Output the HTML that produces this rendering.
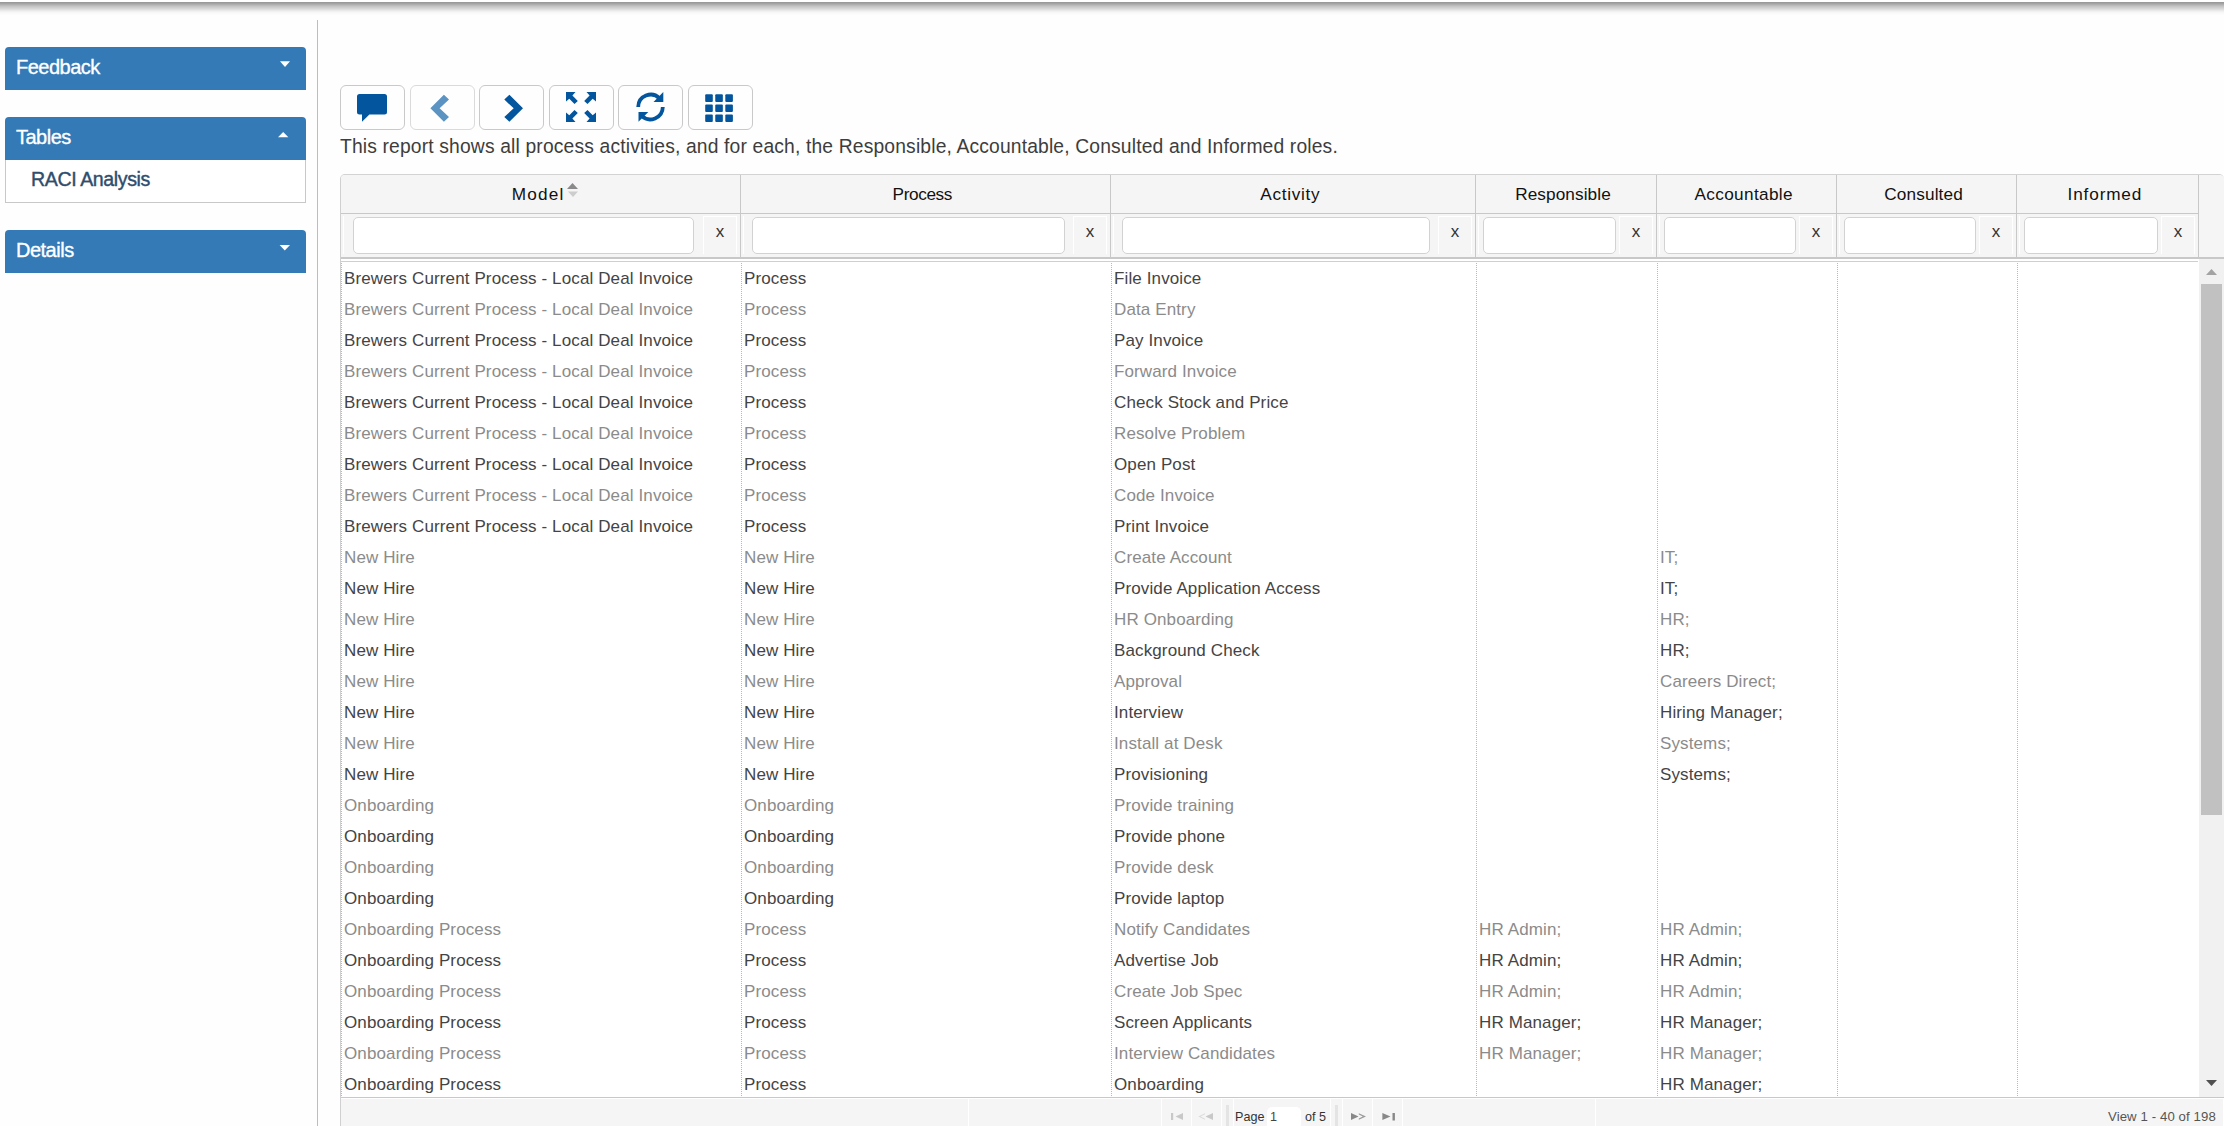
<!DOCTYPE html>
<html><head><meta charset="utf-8"><title>RACI Analysis</title>
<style>
*{box-sizing:border-box}
html,body{margin:0;padding:0}
body{width:2224px;height:1126px;overflow:hidden;position:relative;background:#fefefe;font-family:"Liberation Sans",sans-serif;color:#333}
.a{position:absolute}
.shadow{left:0;top:0;width:2224px;height:17px;background:linear-gradient(#fff 0,#fff 2px,#959595 2px,#a8a8a8 4px,#c2c2c2 6px,#dadada 9px,#eeeeee 11px,#f9f9f9 13px,#fefefe 15px)}
.vdiv{left:317px;top:20px;width:1px;height:1106px;background:#bdbdbd}
.ph{left:5px;width:301px;height:43px;background:#337ab7;border-radius:4px 4px 0 0;color:#fff;font-size:20px;letter-spacing:-0.5px;-webkit-text-stroke:0.35px #fff}
.ph span{position:absolute;left:11px;top:9px;line-height:22px;white-space:nowrap}
.car{position:absolute;width:0;height:0;border-left:5px solid transparent;border-right:5px solid transparent}
.dn{border-top:6px solid #fff}
.up{border-bottom:6px solid #fff}
.pb{left:5px;top:160px;width:301px;height:43px;background:#fff;border:1px solid #c8c8c8;border-top:0}
.pb span{position:absolute;left:25px;top:8px;line-height:22px;font-size:19.6px;letter-spacing:-0.4px;color:#2f4d6d;-webkit-text-stroke:0.4px #2f4d6d;white-space:nowrap}
.btn{top:85px;width:65px;height:45px;border:1px solid #cbcbcb;border-radius:6px;background:#fefefe}
.btn svg{position:absolute;left:0;top:0}
.desc{left:340px;top:137px;font-size:19.3px;letter-spacing:0.15px;line-height:20.5px;white-space:nowrap;color:#3d3d3d}
.grid{left:340px;top:174px;width:1884px;height:952px;border-left:1px solid #d0d0d0;border-top:1px solid #d3d3d3;border-radius:5px 5px 0 0;overflow:hidden;background:#fff}
.hdr{left:0;top:0;width:1883px;height:83px;background:#f5f5f5}
.hl{background:#c8c8c8}
.ht{top:2px;height:36px;line-height:35px;font-size:17.2px;color:#111;text-align:center;white-space:nowrap;letter-spacing:0px}
.fw{top:41px;height:38px;border-left:1px solid #fff}
.xc{top:41px;height:38px;width:34px;border:1px solid #fff;border-bottom:0;font-size:17px;line-height:30px;text-align:center;color:#333}
.inp{top:42px;height:37px;background:#fff;border:1px solid #d2d2d2;border-radius:5px}
.body{left:0;top:88px;width:1858px;height:835px;overflow:hidden;background:#fff}
.cell{height:31px;line-height:33px;font-size:17px;letter-spacing:0.12px;white-space:nowrap;overflow:hidden;padding-left:2px}
.g{color:#8b8b8b}
.d{color:#444}
.dot{top:-1px;width:1px;height:835px;border-left:1px dotted #b9b9b9}
.sb{left:1858px;top:84px;width:26px;height:839px;background:#f1f1f1}
.thumb{left:2px;top:26px;width:21px;height:531px;background:#c1c1c1}
.pager{left:0;top:924px;width:1883px;height:28px;background:#f5f5f5;font-size:13px;color:#444}
.ptxt{top:10px;font-size:12.6px;line-height:16px;white-space:nowrap}
</style></head><body>
<div class="a shadow"></div>
<div class="a vdiv"></div>
<div class="a ph" style="top:47px"><span>Feedback</span><svg class="a" style="left:0;top:0" width="301" height="43"><path d="M275 14.3H285L280 20Z" fill="#fff"/></svg></div>
<div class="a ph" style="top:117px"><span>Tables</span><svg class="a" style="left:0;top:0" width="301" height="43"><path d="M273 20.2H283.4L278.2 15Z" fill="#fff"/></svg></div>
<div class="a pb"><span>RACI Analysis</span></div>
<div class="a ph" style="top:230px"><span>Details</span><svg class="a" style="left:0;top:0" width="301" height="43"><path d="M274.6 14.9H285L279.8 20.5Z" fill="#fff"/></svg></div>
<div class="a btn" style="left:340px;border-color:#c9c9c9"><svg width="65" height="45" viewBox="0 0 65 45" style="left:-1px;top:-1px"><path fill="#03559e" d="M19.5 9H44.5A2.5 2.5 0 0 1 47 11.5V26.9A2.5 2.5 0 0 1 44.5 29.4H29.4L22 36.8V29.4H19.5A2.5 2.5 0 0 1 17 26.9V11.5A2.5 2.5 0 0 1 19.5 9Z"/></svg></div>
<div class="a btn" style="left:409.6px;border-color:#dadada"><svg width="65" height="45" viewBox="0 0 65 45" style="left:-1px;top:-1px"><path fill="#5b93c3" d="M33.9 9.8L39 14.6 29.6 23.3 39 32 33.9 36.8 20.4 23.3z"/></svg></div>
<div class="a btn" style="left:479.2px;border-color:#c9c9c9"><svg width="65" height="45" viewBox="0 0 65 45" style="left:-1px;top:-1px"><path fill="#03559e" d="M30.4 9.8L25.3 14.6 34.7 23.3 25.3 32 30.4 36.8 44 23.3z"/></svg></div>
<div class="a btn" style="left:548.8px;border-color:#c9c9c9"><svg width="65" height="45" viewBox="0 0 65 45" style="left:-1px;top:-1px"><g transform="translate(17 7)" fill="#03559e"><path d="M0 0H9.5L6.4 3.5 11.8 8.9 8.5 12.1 3.3 6.7 0 9.6Z"/><path transform="translate(30 0) scale(-1 1)" d="M0 0H9.5L6.4 3.5 11.8 8.9 8.5 12.1 3.3 6.7 0 9.6Z"/><path transform="translate(0 30) scale(1 -1)" d="M0 0H9.5L6.4 3.5 11.8 8.9 8.5 12.1 3.3 6.7 0 9.6Z"/><path transform="translate(30 30) scale(-1 -1)" d="M0 0H9.5L6.4 3.5 11.8 8.9 8.5 12.1 3.3 6.7 0 9.6Z"/></g></svg></div>
<div class="a btn" style="left:618.4px;border-color:#c9c9c9"><svg width="65" height="45" viewBox="0 0 65 45" style="left:-1px;top:-1px"><g fill="none" stroke="#03559e" stroke-width="3.8"><path d="M20.2 22A12.5 12.5 0 0 1 41.5 13.3"/><path d="M44.8 22A12.5 12.5 0 0 1 23.5 30.7"/></g><path fill="#03559e" d="M45.3 7.1V16.9H35.5Z"/><path fill="#03559e" d="M20.5 36.8V27H30.3Z"/></svg></div>
<div class="a btn" style="left:688px;border-color:#c9c9c9"><svg width="65" height="45" viewBox="0 0 65 45" style="left:-1px;top:-1px"><rect x="17.20" y="9.30" width="7.6" height="7.6" rx="1" fill="#03559e"/><rect x="17.20" y="19.40" width="7.6" height="7.6" rx="1" fill="#03559e"/><rect x="17.20" y="29.50" width="7.6" height="7.6" rx="1" fill="#03559e"/><rect x="27.25" y="9.30" width="7.6" height="7.6" rx="1" fill="#03559e"/><rect x="27.25" y="19.40" width="7.6" height="7.6" rx="1" fill="#03559e"/><rect x="27.25" y="29.50" width="7.6" height="7.6" rx="1" fill="#03559e"/><rect x="37.30" y="9.30" width="7.6" height="7.6" rx="1" fill="#03559e"/><rect x="37.30" y="19.40" width="7.6" height="7.6" rx="1" fill="#03559e"/><rect x="37.30" y="29.50" width="7.6" height="7.6" rx="1" fill="#03559e"/></svg></div>
<div class="a desc">This report shows all process activities, and for each, the Responsible, Accountable, Consulted and Informed roles.</div>
<div class="a grid">
<div class="a hdr"></div>
<div class="a hl" style="left:0;top:38px;width:1857px;height:1px"></div>
<div class="a hl" style="left:399px;top:0;width:1px;height:82px"></div>
<div class="a hl" style="left:769px;top:0;width:1px;height:82px"></div>
<div class="a hl" style="left:1134px;top:0;width:1px;height:82px"></div>
<div class="a hl" style="left:1315px;top:0;width:1px;height:82px"></div>
<div class="a hl" style="left:1495px;top:0;width:1px;height:82px"></div>
<div class="a hl" style="left:1675px;top:0;width:1px;height:82px"></div>
<div class="a hl" style="left:1857px;top:0;width:1px;height:82px"></div>
<div class="a hl" style="left:0;top:82px;width:1883px;height:2px"></div>
<div class="a hl" style="left:0;top:86px;width:1857px;height:1px;background:#cfcfcf"></div>
<div class="a ht" style="left:47.1px;width:300px;top:2px;letter-spacing:1.2px">Model</div>
<div class="a fw" style="left:2px;top:41px;width:360px"></div>
<div class="a inp" style="left:12.0px;top:42px;width:341px"></div>
<div class="a xc" style="left:362px;top:41px">x</div>
<div class="a ht" style="left:431.3px;width:300px;top:2px;letter-spacing:-0.38px">Process</div>
<div class="a fw" style="left:402px;top:41px;width:330px"></div>
<div class="a inp" style="left:411.0px;top:42px;width:313px"></div>
<div class="a xc" style="left:732px;top:41px">x</div>
<div class="a ht" style="left:799.4px;width:300px;top:2px;letter-spacing:0.7px">Activity</div>
<div class="a fw" style="left:772px;top:41px;width:325px"></div>
<div class="a inp" style="left:781.0px;top:42px;width:308px"></div>
<div class="a xc" style="left:1097px;top:41px">x</div>
<div class="a ht" style="left:1072.0px;width:300px;top:2px;letter-spacing:0.1px">Responsible</div>
<div class="a fw" style="left:1137px;top:41px;width:141px"></div>
<div class="a inp" style="left:1141.5px;top:42px;width:133px"></div>
<div class="a xc" style="left:1278px;top:41px">x</div>
<div class="a ht" style="left:1252.7px;width:300px;top:2px;letter-spacing:0.35px">Accountable</div>
<div class="a fw" style="left:1318px;top:41px;width:140px"></div>
<div class="a inp" style="left:1322.5px;top:42px;width:132px"></div>
<div class="a xc" style="left:1458px;top:41px">x</div>
<div class="a ht" style="left:1432.6px;width:300px;top:2px;letter-spacing:0.15px">Consulted</div>
<div class="a fw" style="left:1498px;top:41px;width:140px"></div>
<div class="a inp" style="left:1502.5px;top:42px;width:132px"></div>
<div class="a xc" style="left:1638px;top:41px">x</div>
<div class="a ht" style="left:1613.9px;width:300px;top:2px;letter-spacing:0.85px">Informed</div>
<div class="a fw" style="left:1678px;top:41px;width:142px"></div>
<div class="a inp" style="left:1682.5px;top:42px;width:134px"></div>
<div class="a xc" style="left:1820px;top:41px">x</div>
<svg class="a" style="left:225px;top:7px" width="14" height="17" viewBox="0 0 14 17"><path fill="#8a8a8a" d="M1 7H12L6.5 1z"/><path fill="#cdcdcd" d="M2 9.5H12L7 15z"/></svg>
<div class="a body" style="top:87px">
<div class="a cell d" style="left:1px;top:0px;width:398px">Brewers Current Process - Local Deal Invoice</div>
<div class="a cell d" style="left:401px;top:0px;width:368px">Process</div>
<div class="a cell d" style="left:771px;top:0px;width:363px">File Invoice</div>
<div class="a cell g" style="left:1px;top:31px;width:398px">Brewers Current Process - Local Deal Invoice</div>
<div class="a cell g" style="left:401px;top:31px;width:368px">Process</div>
<div class="a cell g" style="left:771px;top:31px;width:363px">Data Entry</div>
<div class="a cell d" style="left:1px;top:62px;width:398px">Brewers Current Process - Local Deal Invoice</div>
<div class="a cell d" style="left:401px;top:62px;width:368px">Process</div>
<div class="a cell d" style="left:771px;top:62px;width:363px">Pay Invoice</div>
<div class="a cell g" style="left:1px;top:93px;width:398px">Brewers Current Process - Local Deal Invoice</div>
<div class="a cell g" style="left:401px;top:93px;width:368px">Process</div>
<div class="a cell g" style="left:771px;top:93px;width:363px">Forward Invoice</div>
<div class="a cell d" style="left:1px;top:124px;width:398px">Brewers Current Process - Local Deal Invoice</div>
<div class="a cell d" style="left:401px;top:124px;width:368px">Process</div>
<div class="a cell d" style="left:771px;top:124px;width:363px">Check Stock and Price</div>
<div class="a cell g" style="left:1px;top:155px;width:398px">Brewers Current Process - Local Deal Invoice</div>
<div class="a cell g" style="left:401px;top:155px;width:368px">Process</div>
<div class="a cell g" style="left:771px;top:155px;width:363px">Resolve Problem</div>
<div class="a cell d" style="left:1px;top:186px;width:398px">Brewers Current Process - Local Deal Invoice</div>
<div class="a cell d" style="left:401px;top:186px;width:368px">Process</div>
<div class="a cell d" style="left:771px;top:186px;width:363px">Open Post</div>
<div class="a cell g" style="left:1px;top:217px;width:398px">Brewers Current Process - Local Deal Invoice</div>
<div class="a cell g" style="left:401px;top:217px;width:368px">Process</div>
<div class="a cell g" style="left:771px;top:217px;width:363px">Code Invoice</div>
<div class="a cell d" style="left:1px;top:248px;width:398px">Brewers Current Process - Local Deal Invoice</div>
<div class="a cell d" style="left:401px;top:248px;width:368px">Process</div>
<div class="a cell d" style="left:771px;top:248px;width:363px">Print Invoice</div>
<div class="a cell g" style="left:1px;top:279px;width:398px">New Hire</div>
<div class="a cell g" style="left:401px;top:279px;width:368px">New Hire</div>
<div class="a cell g" style="left:771px;top:279px;width:363px">Create Account</div>
<div class="a cell g" style="left:1317px;top:279px;width:178px">IT;</div>
<div class="a cell d" style="left:1px;top:310px;width:398px">New Hire</div>
<div class="a cell d" style="left:401px;top:310px;width:368px">New Hire</div>
<div class="a cell d" style="left:771px;top:310px;width:363px">Provide Application Access</div>
<div class="a cell d" style="left:1317px;top:310px;width:178px">IT;</div>
<div class="a cell g" style="left:1px;top:341px;width:398px">New Hire</div>
<div class="a cell g" style="left:401px;top:341px;width:368px">New Hire</div>
<div class="a cell g" style="left:771px;top:341px;width:363px">HR Onboarding</div>
<div class="a cell g" style="left:1317px;top:341px;width:178px">HR;</div>
<div class="a cell d" style="left:1px;top:372px;width:398px">New Hire</div>
<div class="a cell d" style="left:401px;top:372px;width:368px">New Hire</div>
<div class="a cell d" style="left:771px;top:372px;width:363px">Background Check</div>
<div class="a cell d" style="left:1317px;top:372px;width:178px">HR;</div>
<div class="a cell g" style="left:1px;top:403px;width:398px">New Hire</div>
<div class="a cell g" style="left:401px;top:403px;width:368px">New Hire</div>
<div class="a cell g" style="left:771px;top:403px;width:363px">Approval</div>
<div class="a cell g" style="left:1317px;top:403px;width:178px">Careers Direct;</div>
<div class="a cell d" style="left:1px;top:434px;width:398px">New Hire</div>
<div class="a cell d" style="left:401px;top:434px;width:368px">New Hire</div>
<div class="a cell d" style="left:771px;top:434px;width:363px">Interview</div>
<div class="a cell d" style="left:1317px;top:434px;width:178px">Hiring Manager;</div>
<div class="a cell g" style="left:1px;top:465px;width:398px">New Hire</div>
<div class="a cell g" style="left:401px;top:465px;width:368px">New Hire</div>
<div class="a cell g" style="left:771px;top:465px;width:363px">Install at Desk</div>
<div class="a cell g" style="left:1317px;top:465px;width:178px">Systems;</div>
<div class="a cell d" style="left:1px;top:496px;width:398px">New Hire</div>
<div class="a cell d" style="left:401px;top:496px;width:368px">New Hire</div>
<div class="a cell d" style="left:771px;top:496px;width:363px">Provisioning</div>
<div class="a cell d" style="left:1317px;top:496px;width:178px">Systems;</div>
<div class="a cell g" style="left:1px;top:527px;width:398px">Onboarding</div>
<div class="a cell g" style="left:401px;top:527px;width:368px">Onboarding</div>
<div class="a cell g" style="left:771px;top:527px;width:363px">Provide training</div>
<div class="a cell d" style="left:1px;top:558px;width:398px">Onboarding</div>
<div class="a cell d" style="left:401px;top:558px;width:368px">Onboarding</div>
<div class="a cell d" style="left:771px;top:558px;width:363px">Provide phone</div>
<div class="a cell g" style="left:1px;top:589px;width:398px">Onboarding</div>
<div class="a cell g" style="left:401px;top:589px;width:368px">Onboarding</div>
<div class="a cell g" style="left:771px;top:589px;width:363px">Provide desk</div>
<div class="a cell d" style="left:1px;top:620px;width:398px">Onboarding</div>
<div class="a cell d" style="left:401px;top:620px;width:368px">Onboarding</div>
<div class="a cell d" style="left:771px;top:620px;width:363px">Provide laptop</div>
<div class="a cell g" style="left:1px;top:651px;width:398px">Onboarding Process</div>
<div class="a cell g" style="left:401px;top:651px;width:368px">Process</div>
<div class="a cell g" style="left:771px;top:651px;width:363px">Notify Candidates</div>
<div class="a cell g" style="left:1136px;top:651px;width:179px">HR Admin;</div>
<div class="a cell g" style="left:1317px;top:651px;width:178px">HR Admin;</div>
<div class="a cell d" style="left:1px;top:682px;width:398px">Onboarding Process</div>
<div class="a cell d" style="left:401px;top:682px;width:368px">Process</div>
<div class="a cell d" style="left:771px;top:682px;width:363px">Advertise Job</div>
<div class="a cell d" style="left:1136px;top:682px;width:179px">HR Admin;</div>
<div class="a cell d" style="left:1317px;top:682px;width:178px">HR Admin;</div>
<div class="a cell g" style="left:1px;top:713px;width:398px">Onboarding Process</div>
<div class="a cell g" style="left:401px;top:713px;width:368px">Process</div>
<div class="a cell g" style="left:771px;top:713px;width:363px">Create Job Spec</div>
<div class="a cell g" style="left:1136px;top:713px;width:179px">HR Admin;</div>
<div class="a cell g" style="left:1317px;top:713px;width:178px">HR Admin;</div>
<div class="a cell d" style="left:1px;top:744px;width:398px">Onboarding Process</div>
<div class="a cell d" style="left:401px;top:744px;width:368px">Process</div>
<div class="a cell d" style="left:771px;top:744px;width:363px">Screen Applicants</div>
<div class="a cell d" style="left:1136px;top:744px;width:179px">HR Manager;</div>
<div class="a cell d" style="left:1317px;top:744px;width:178px">HR Manager;</div>
<div class="a cell g" style="left:1px;top:775px;width:398px">Onboarding Process</div>
<div class="a cell g" style="left:401px;top:775px;width:368px">Process</div>
<div class="a cell g" style="left:771px;top:775px;width:363px">Interview Candidates</div>
<div class="a cell g" style="left:1136px;top:775px;width:179px">HR Manager;</div>
<div class="a cell g" style="left:1317px;top:775px;width:178px">HR Manager;</div>
<div class="a cell d" style="left:1px;top:806px;width:398px">Onboarding Process</div>
<div class="a cell d" style="left:401px;top:806px;width:368px">Process</div>
<div class="a cell d" style="left:771px;top:806px;width:363px">Onboarding</div>
<div class="a cell d" style="left:1317px;top:806px;width:178px">HR Manager;</div>
<div class="a dot" style="left:0px"></div>
<div class="a dot" style="left:400px"></div>
<div class="a dot" style="left:770px"></div>
<div class="a dot" style="left:1135px"></div>
<div class="a dot" style="left:1316px"></div>
<div class="a dot" style="left:1496px"></div>
<div class="a dot" style="left:1676px"></div>
</div>
<div class="a sb" style="top:84px;height:838px"><svg class="a" style="left:0;top:0" width="26" height="30" viewBox="0 0 26 30"><path d="M7 16H18L12.5 10Z" fill="#a3a3a3"/></svg><div class="a thumb" style="top:25px;height:531px"></div><svg class="a" style="left:0;top:816px" width="26" height="20" viewBox="0 0 26 20"><path d="M7 5H18L12.5 11Z" fill="#505050"/></svg></div>
<div class="a hl" style="left:0;top:922px;width:1883px;height:1px"></div>
<div class="a" style="left:0;top:923px;width:1883px;height:28px;background:#fff"></div>
<div class="a pager" style="top:924px;height:27px;width:1882px"><div class="a" style="left:627px;top:0;width:1px;height:27px;background:#fff"></div><div class="a" style="left:820px;top:0;width:1px;height:27px;background:#fff"></div><div class="a" style="left:850px;top:0;width:1px;height:27px;background:#fff"></div><div class="a" style="left:880px;top:0;width:1px;height:27px;background:#fff"></div><div class="a" style="left:892px;top:0;width:1px;height:27px;background:#fff"></div><div class="a" style="left:989px;top:0;width:1px;height:27px;background:#fff"></div><div class="a" style="left:1001px;top:0;width:1px;height:27px;background:#fff"></div><div class="a" style="left:1031px;top:0;width:1px;height:27px;background:#fff"></div><div class="a" style="left:1061px;top:0;width:1px;height:27px;background:#fff"></div><div class="a" style="left:1254px;top:0;width:1px;height:27px;background:#fff"></div><svg class="a" style="left:827px;top:11px" width="20" height="14" viewBox="0 0 20 14"><rect x="3" y="3" width="2.2" height="7" fill="#c8c8c8"/><path d="M7.5 6.5L15 3V10Z" fill="#c8c8c8"/></svg><svg class="a" style="left:855px;top:11px" width="20" height="14" viewBox="0 0 20 14"><path d="M2.3 6.5L9 3.2 9 4.2 4.5 6.5 9 8.8 9 9.8Z" fill="#dadada"/><path d="M9.5 6.5L17 3V10Z" fill="#c8c8c8"/></svg><div class="a" style="left:885px;top:6px;width:3px;height:22px;background:#e4e4e4"></div><div class="a" style="left:994px;top:6px;width:3px;height:22px;background:#e4e4e4"></div><div class="a ptxt" style="left:894px;color:#333">Page</div><div class="a" style="left:926px;top:8px;width:34px;height:22px;background:#fff;border-radius:5px"></div><div class="a ptxt" style="left:929px;color:#444">1</div><div class="a ptxt" style="left:964px;color:#333">of 5</div><svg class="a" style="left:1008px;top:11px" width="20" height="14" viewBox="0 0 20 14"><path d="M2 3L9.5 6.5 2 10Z" fill="#888"/><path d="M9.8 3.2L17 6.5 9.8 9.8 9.8 8.6 13.8 6.5 9.8 4.4Z" fill="#9a9a9a"/></svg><svg class="a" style="left:1039px;top:11px" width="20" height="14" viewBox="0 0 20 14"><path d="M2.4 3L10.5 6.5 2.4 10Z" fill="#888"/><rect x="12.5" y="3" width="2.4" height="7.5" fill="#888"/></svg><div class="a ptxt" style="left:1767px;color:#555;font-size:13.2px;letter-spacing:0.1px">View 1 - 40 of 198</div></div>
</div>
</body></html>
